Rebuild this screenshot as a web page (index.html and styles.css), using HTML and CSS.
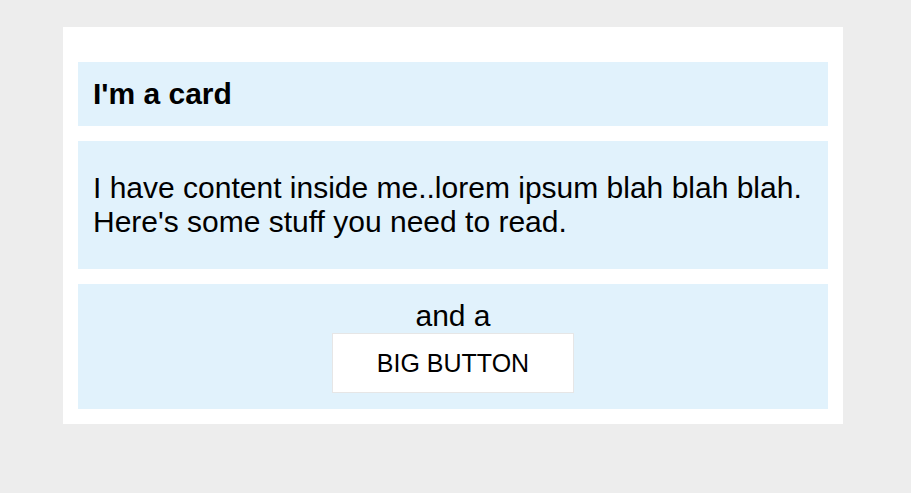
FILE: index.html
```html
<!DOCTYPE html>
<html lang="en">

<head>
    <meta charset="UTF-8">
    <meta name="viewport" content="width=device-width, initial-scale=1.0">
    <title>Card</title>
    <link rel="stylesheet" href="styles.css">
</head>

<body>
    <div class="card">
        <div class="section header">I'm a card</div>
        <div class="section content">
            <p>I have content inside me..lorem ipsum blah blah blah. Here's some stuff you need to read.</p>
        </div>
        <div class="section footer">
            <div>and a</div>
            <button class="big-button">BIG BUTTON</button>
        </div>
    </div>
</body>

</html>
```

FILE: styles.css
```css
body {
    margin: 0;
    background: #ededed;
    font-family: "Liberation Sans", Arial, sans-serif;
    color: #000;
}

.card {
    width: 780px;
    box-sizing: border-box;
    margin: 27px 0 0 63px;
    padding: 35px 15px 15px;
    background: #fff;
    display: flex;
    flex-direction: column;
    gap: 15px;
}

.section {
    background: #e1f2fc;
    padding: 15px;
    font-size: 30px;
}

.header {
    font-weight: bold;
}

.content {
    height: 128px;
    box-sizing: border-box;
    display: flex;
    align-items: center;
}

.content p {
    margin: 0;
}

.footer {
    display: flex;
    flex-direction: column;
    align-items: center;
    padding-bottom: 16px;
}

.big-button {
    width: 242px;
    height: 60px;
    background: #fff;
    border: 1px solid #e6e6e6;
    font-family: inherit;
    font-size: 25px;
    color: #000;
}
```
